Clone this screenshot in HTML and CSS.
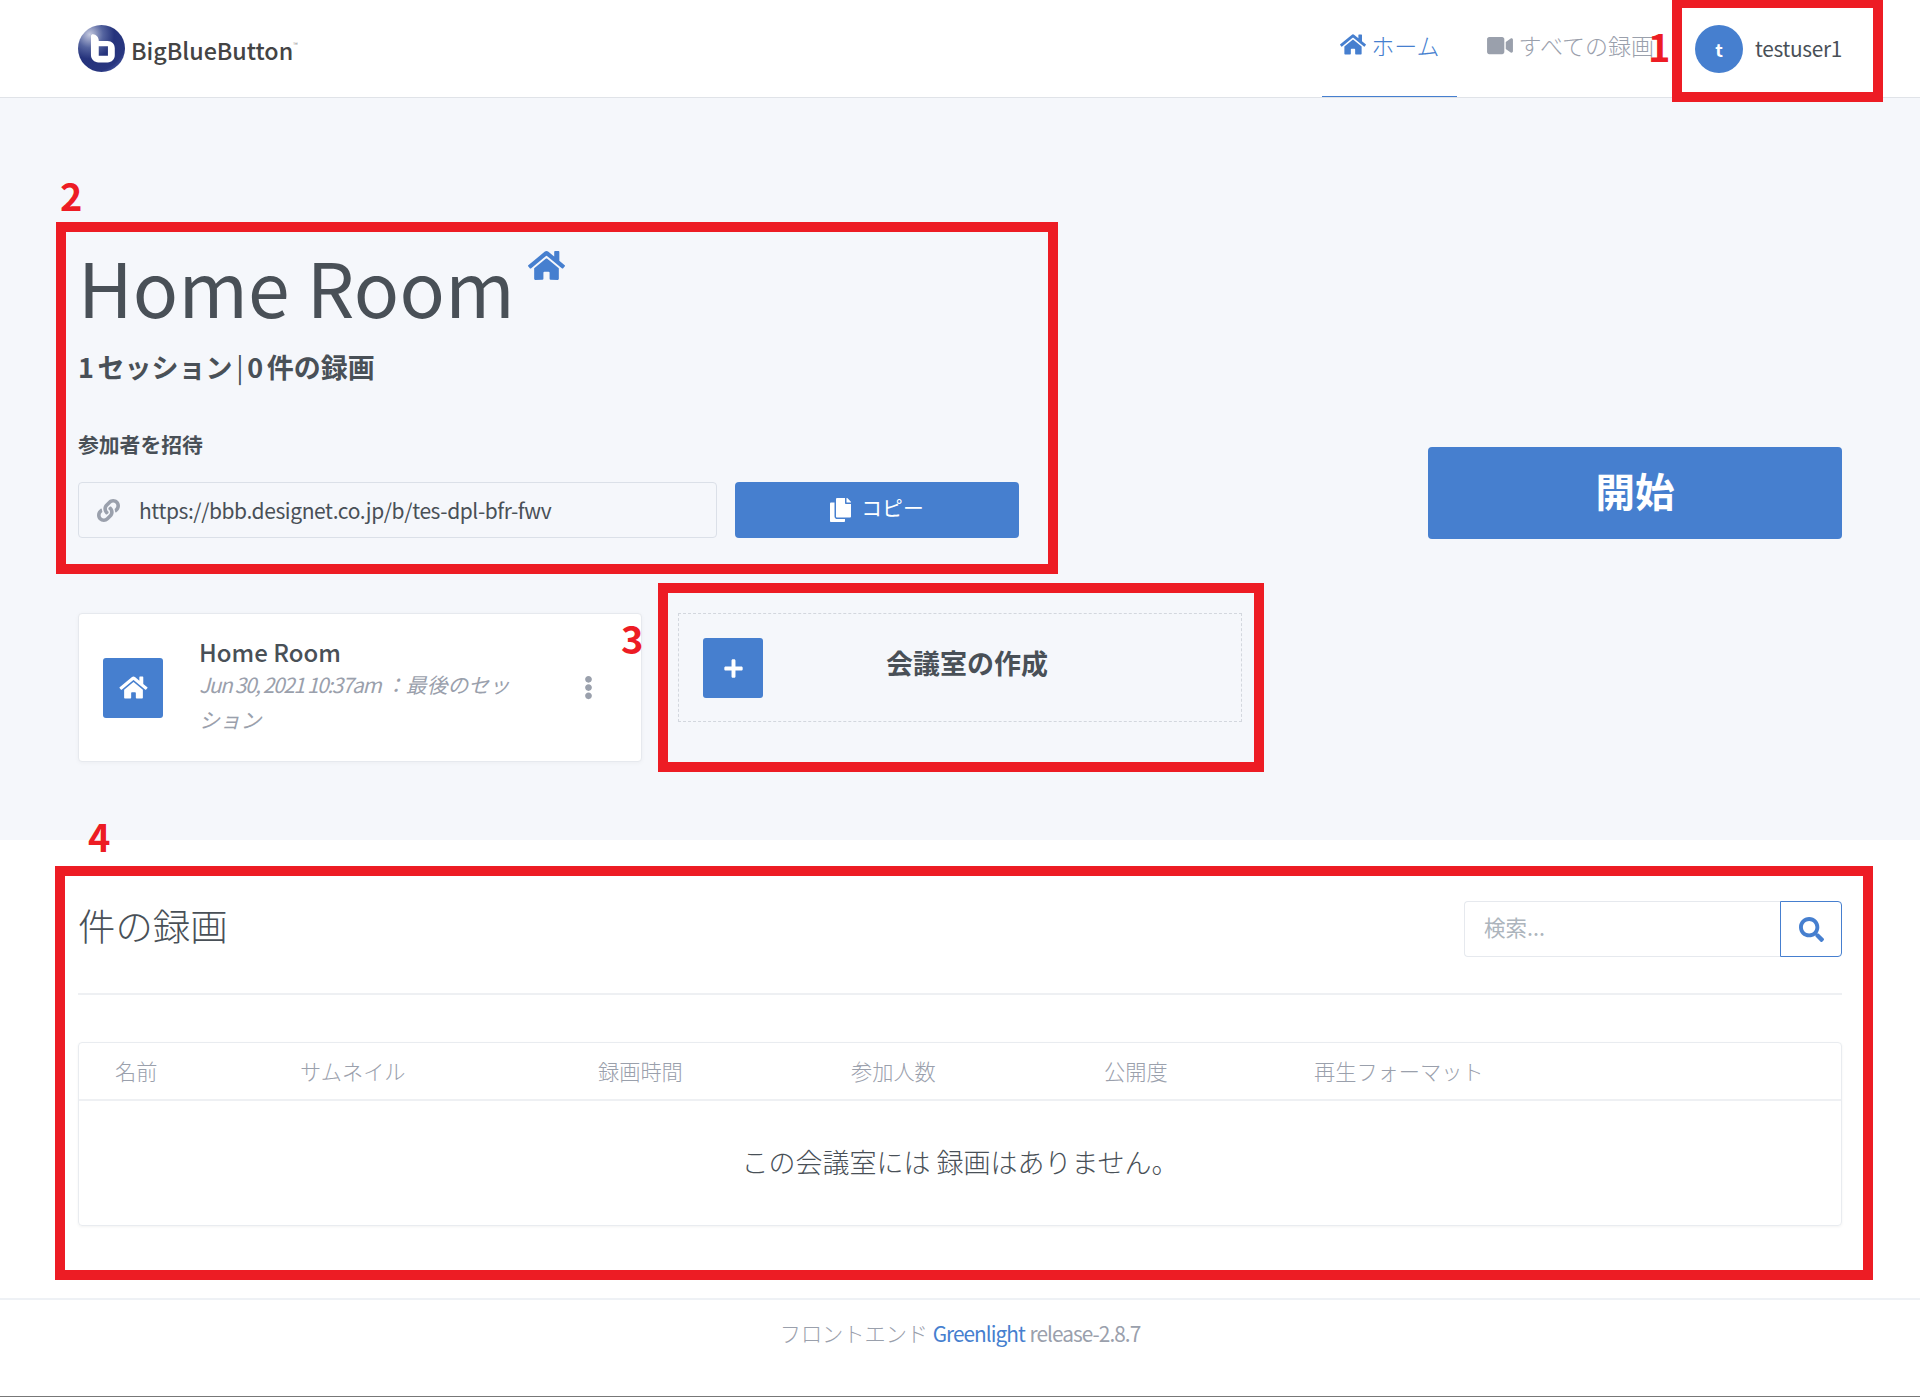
FILE: index.html
```html
<!DOCTYPE html>
<html lang="ja">
<head>
    <meta charset="UTF-8">
    <meta name="viewport" content="width=device-width, initial-scale=1.0">
    <title>BigBlueButton</title>
    <link rel="stylesheet" href="styles.css">
</head>
<body>
    <svg class="icon-defs" aria-hidden="true">
        <symbol id="i-home" viewBox="0 0 576 512"><path d="M280.37 148.26L96 300.11V464a16 16 0 0 0 16 16l112.06-.29a16 16 0 0 0 15.92-16V368a16 16 0 0 1 16-16h64a16 16 0 0 1 16 16v95.64a16 16 0 0 0 16 16.05L464 480a16 16 0 0 0 16-16V300L295.67 148.26a12.19 12.19 0 0 0-15.3 0zM571.6 251.47L488 182.56V44.05a12 12 0 0 0-12-12h-56a12 12 0 0 0-12 12v72.61L318.47 43a48 48 0 0 0-61 0L4.34 251.47a12 12 0 0 0-1.6 16.9l25.5 31A12 12 0 0 0 45.15 301l235.22-193.74a12.19 12.19 0 0 1 15.3 0L530.9 301a12 12 0 0 0 16.9-1.6l25.5-31a12 12 0 0 0-1.7-16.93z"/></symbol>
        <symbol id="i-video" viewBox="0 0 576 512"><path d="M336.2 64H47.8C21.4 64 0 85.4 0 111.8v288.4C0 426.6 21.4 448 47.8 448h288.4c26.4 0 47.8-21.4 47.8-47.8V111.8c0-26.4-21.4-47.8-47.8-47.8zm189.4 37.7L416 177.3v157.4l109.6 75.5c21.2 14.6 50.4-.3 50.4-25.8V127.5c0-25.4-29.1-40.4-50.4-25.8z"/></symbol>
        <symbol id="i-link" viewBox="0 0 512 512"><path d="M326.612 185.391c59.747 59.809 58.927 155.698.36 214.59-.11.12-.24.25-.36.37l-67.2 67.2c-59.27 59.27-155.699 59.262-214.96 0-59.27-59.26-59.27-155.7 0-214.96l37.106-37.106c9.84-9.84 26.786-3.3 27.294 10.606.648 17.722 3.826 35.527 9.69 52.721 1.986 5.822.567 12.262-3.783 16.612l-13.087 13.087c-28.026 28.026-28.905 73.66-1.155 101.96 28.024 28.579 74.086 28.749 102.325.51l67.2-67.19c28.191-28.191 28.073-73.757 0-101.83-3.701-3.694-7.429-6.564-10.341-8.569a16.037 16.037 0 0 1-6.947-12.606c-.396-10.567 3.348-21.456 11.698-29.806l21.054-21.055c5.521-5.521 14.182-6.199 20.584-1.731a152.482 152.482 0 0 1 20.522 17.197zM467.547 44.449c-59.261-59.262-155.69-59.27-214.96 0l-67.2 67.2c-.12.12-.25.25-.36.37-58.566 58.892-59.387 154.781.36 214.59a152.454 152.454 0 0 0 20.521 17.196c6.402 4.468 15.064 3.789 20.584-1.731l21.054-21.055c8.35-8.35 12.094-19.239 11.698-29.806a16.037 16.037 0 0 0-6.947-12.606c-2.912-2.005-6.64-4.875-10.341-8.569-28.073-28.073-28.191-73.639 0-101.83l67.2-67.19c28.239-28.239 74.3-28.069 102.325.51 27.75 28.3 26.872 73.934-1.155 101.96l-13.087 13.087c-4.35 4.35-5.769 10.79-3.783 16.612 5.864 17.194 9.042 34.999 9.69 52.721.509 13.906 17.454 20.446 27.294 10.606l37.106-37.106c59.271-59.259 59.271-155.699.001-214.959z"/></symbol>
        <symbol id="i-copy" viewBox="0 0 448 512"><path d="M320 448v40c0 13.255-10.745 24-24 24H24c-13.255 0-24-10.745-24-24V120c0-13.255 10.745-24 24-24h72v296c0 30.879 25.121 56 56 56h168zm0-344V0H152c-13.255 0-24 10.745-24 24v368c0 13.255 10.745 24 24 24h272c13.255 0 24-10.745 24-24V128H344c-13.2 0-24-10.8-24-24zm120.971-31.029L375.029 7.029A24 24 0 0 0 358.059 0H352v96h96v-6.059a24 24 0 0 0-7.029-16.97z"/></symbol>
        <symbol id="i-search" viewBox="0 0 512 512"><path d="M505 442.7L405.3 343c-4.5-4.5-10.6-7-17-7H372c27.6-35.3 44-79.7 44-128C416 93.1 322.9 0 208 0S0 93.1 0 208s93.1 208 208 208c48.3 0 92.7-16.4 128-44v16.3c0 6.4 2.5 12.5 7 17l99.7 99.7c9.4 9.4 24.6 9.4 33.9 0l28.3-28.3c9.4-9.4 9.4-24.6.1-34zM208 336c-70.7 0-128-57.2-128-128 0-70.7 57.2-128 128-128 70.7 0 128 57.2 128 128 0 70.7-57.2 128-128 128z"/></symbol>
        <symbol id="i-plus" viewBox="0 0 448 512"><path d="M416 208H272V64c0-17.67-14.33-32-32-32h-32c-17.67 0-32 14.33-32 32v144H32c-17.67 0-32 14.33-32 32v32c0 17.67 14.33 32 32 32h144v144c0 17.67 14.33 32 32 32h32c17.67 0 32-14.33 32-32V304h144c17.67 0 32-14.33 32-32v-32c0-17.67-14.33-32-32-32z"/></symbol>
        <symbol id="i-dots" viewBox="0 0 192 512"><path d="M96 184c39.8 0 72 32.2 72 72s-32.2 72-72 72-72-32.2-72-72 32.2-72 72-72zM24 80c0 39.8 32.2 72 72 72s72-32.2 72-72S135.8 8 96 8 24 40.2 24 80zm0 352c0 39.8 32.2 72 72 72s72-32.2 72-72-32.2-72-72-72-72 32.2-72 72z"/></symbol>
    </svg>

    <div class="page">
        <header class="navbar">
            <a class="brand" href="#">
                <svg class="brand-mark" viewBox="0 0 46 46" aria-hidden="true">
                    <defs>
                        <radialGradient id="brand-glow" cx="0.25" cy="0.2" r="0.95">
                            <stop offset="0" stop-color="#c4c9df"/>
                            <stop offset="0.3" stop-color="#55649f"/>
                            <stop offset="0.55" stop-color="#25337c"/>
                            <stop offset="0.85" stop-color="#28367f"/>
                            <stop offset="1" stop-color="#4a5aa6"/>
                        </radialGradient>
                    </defs>
                    <circle cx="23" cy="23" r="23" fill="url(#brand-glow)"/>
                    <path fill="#fff" fill-rule="evenodd" d="M12.700 11c0-1.500 1-2 2-2 3 0 5.600 3 5.600 6v.7H29c4 0 7 3 7 7v7c0 4-3 7-7 7h-9c-4 0-7.300-3-7.300-7zM20.300 20.700V30h9v-9.300z"/>
                </svg>
                <span class="brand-name">BigBlueButton</span><span class="brand-tm">™</span>
            </a>
            <nav class="nav-tabs">
                <a class="nav-tab active" href="#"><svg class="nav-icon"><use href="#i-home"/></svg>ホーム</a>
                <a class="nav-tab" href="#"><svg class="nav-icon"><use href="#i-video"/></svg>すべての録画</a>
            </nav>
            <div class="user">
                <span class="avatar">t</span>
                <span class="user-name">testuser1</span>
            </div>
        </header>

        <main class="hero">
            <div class="hero-top">
                <div class="room-info">
                    <h1 class="room-title">Home Room<svg class="room-title-icon"><use href="#i-home"/></svg></h1>
                    <h5 class="room-stats">1 セッション <span class="stats-sep">|</span> 0 件の録画</h5>
                    <div class="invite-label">参加者を招待</div>
                    <div class="invite-row">
                        <div class="invite-url">
                            <svg class="link-icon"><use href="#i-link"/></svg>
                            <span>https://bbb.designet.co.jp/b/tes-dpl-bfr-fwv</span>
                        </div>
                        <button class="btn btn-copy"><svg class="copy-icon"><use href="#i-copy"/></svg><span class="btn-label">コピー</span></button>
                    </div>
                </div>
                <button class="btn btn-start">開始</button>
            </div>

            <div class="room-row">
                <div class="room-card">
                    <span class="square-icon"><svg class="square-home"><use href="#i-home"/></svg></span>
                    <div class="room-card-body">
                        <div class="room-card-title">Home Room</div>
                        <div class="room-card-date"><span class="date-value">Jun 30, 2021 10:37am</span> ：最後のセッション</div>
                    </div>
                    <svg class="dots"><use href="#i-dots"/></svg>
                </div>
                <div class="room-create">
                    <span class="square-icon"><svg class="square-plus"><use href="#i-plus"/></svg></span>
                    <div class="room-create-text">会議室の作成</div>
                </div>
            </div>
        </main>

        <section class="recordings">
            <div class="recordings-head">
                <h2 class="recordings-title">件の録画</h2>
                <div class="search">
                    <span class="search-input">検索...</span>
                    <span class="search-btn"><svg class="search-icon"><use href="#i-search"/></svg></span>
                </div>
            </div>
            <div class="table-card">
                <div class="table-head">
                    <span>名前</span>
                    <span>サムネイル</span>
                    <span>録画時間</span>
                    <span>参加人数</span>
                    <span>公開度</span>
                    <span>再生フォーマット</span>
                </div>
                <div class="table-empty">この会議室には 録画はありません。</div>
            </div>
        </section>

        <footer class="footer">フロントエンド <a class="footer-latin" href="#">Greenlight</a> <span class="footer-latin">release-2.8.7</span></footer>

        <!-- red call-outs drawn over the screenshot -->
        <div class="callout callout-1"></div>
        <div class="callout callout-2"></div>
        <div class="callout callout-3"></div>
        <div class="callout callout-4"></div>
        <span class="callout-num num-1">1</span>
        <span class="callout-num num-2">2</span>
        <span class="callout-num num-3">3</span>
        <span class="callout-num num-4">4</span>
    </div>
</body>
</html>
```

FILE: styles.css
```css
* {
    margin: 0;
    padding: 0;
    box-sizing: border-box;
}

body {
    font-family: "Noto Sans CJK JP", "Noto Sans", sans-serif;
    font-size: 20.8px;
    color: #495057;
    background: white;
}

a {
    text-decoration: none;
}

.icon-defs {
    display: none;
}

svg {
    fill: currentColor;
    flex-shrink: 0;
}

.page {
    position: relative;
    height: 1397px;
    overflow: hidden;
    border-bottom: 1px solid #777;
}

/* navbar */
.navbar {
    display: flex;
    align-items: center;
    height: 98px;
    padding-left: 78px;
    border-bottom: 1px solid #e0e3e8;
    background: white;
}

.brand {
    display: flex;
    align-items: center;
    color: #444;
}

.brand-mark {
    width: 47px;
    height: 47px;
}

.brand-name {
    margin-left: 6px;
    margin-top: 2px;
    font-size: 23.3px;
    font-weight: 500;
}

.brand-tm {
    font-size: 6px;
    color: #888;
    margin-bottom: 8px;
}

.nav-tabs {
    display: flex;
    gap: 12px;
    margin-left: auto;
    height: 97px;
}

.nav-tab {
    display: flex;
    align-items: center;
    gap: 6px;
    height: 97px;
    padding: 0 18px 7px;
    color: #9aa0ac;
    font-size: 23px;
    font-weight: 300;
}

.nav-tab.active {
    gap: 5px;
    padding-right: 17px;
    color: #467fcf;
    border-bottom: 1px solid #467fcf;
}

.nav-icon {
    width: 26px;
    height: 23px;
}

.user {
    display: flex;
    align-items: center;
    gap: 12px;
    margin-left: 23px;
    padding-right: 78px;
}

.user-name {
    margin-top: -2px;
    letter-spacing: -0.3px;
}

.avatar {
    display: flex;
    align-items: center;
    justify-content: center;
    width: 48px;
    height: 48px;
    border-radius: 50%;
    background: #467fcf;
    color: white;
    font-size: 18px;
    font-weight: 700;
}

/* hero */
.hero {
    height: 742px;
    padding: 0 78px;
    background: #f5f7fb;
}

.hero-top {
    display: flex;
    justify-content: space-between;
    align-items: flex-end;
    height: 441px;
}

.room-info {
    width: 941px;
    margin-bottom: 1px;
}

.room-title {
    display: flex;
    align-items: flex-start;
    font-size: 75px;
    font-weight: 400;
    line-height: 90px;
    letter-spacing: 0.2px;
    color: #495057;
}

.room-title-icon {
    width: 37px;
    height: 33px;
    margin: 8px 0 0 13px;
    color: #467fcf;
}

.room-stats {
    margin-top: 17.5px;
    font-size: 27px;
    line-height: 36px;
    font-weight: 700;
    word-spacing: -2.5px;
}

.stats-sep {
    font-weight: 400;
}

.invite-label {
    margin-top: 44.5px;
    font-size: 20.8px;
    line-height: 30px;
    font-weight: 700;
}

.invite-row {
    display: flex;
    gap: 18px;
    margin-top: 23px;
}

.invite-url {
    display: flex;
    align-items: center;
    gap: 19px;
    width: 639px;
    height: 56px;
    padding-left: 18px;
    border: 1px solid #dbe0e8;
    border-radius: 4px;
    font-size: 21px;
    letter-spacing: -0.41px;
}

.link-icon {
    width: 23px;
    height: 23px;
    color: #9aa0ac;
}

.btn {
    display: flex;
    align-items: center;
    justify-content: center;
    border: none;
    border-radius: 4px;
    background: #467fcf;
    color: white;
    font-family: inherit;
}

.btn-copy {
    gap: 10px;
    width: 284px;
    height: 56px;
    font-size: 20.8px;
}

.btn-label {
    margin-top: -6px;
}

.copy-icon {
    width: 21px;
    height: 24px;
}

.btn-start {
    width: 414px;
    height: 92px;
    padding-bottom: 7px;
    font-size: 39.5px;
    font-weight: 700;
}

.room-row {
    display: flex;
    gap: 37px;
    margin-top: 74px;
}

.square-icon {
    display: flex;
    align-items: center;
    justify-content: center;
    width: 60px;
    height: 60px;
    flex-shrink: 0;
    border-radius: 3px;
    background: #467fcf;
    color: white;
}

.square-home {
    width: 29px;
    height: 25px;
}

.square-plus {
    width: 19px;
    height: 21px;
}

.room-card {
    display: flex;
    align-items: center;
    width: 564px;
    height: 149px;
    padding-left: 24px;
    margin-right: -1px;
    border: 1px solid #e6e9ee;
    border-radius: 4px;
    background: white;
    box-shadow: 0 1px 4px rgba(0, 0, 0, 0.04);
}

.room-card-body {
    width: 325px;
    margin-left: 36px;
    padding-bottom: 1px;
}

.room-card-title {
    font-size: 24px;
    line-height: 30px;
    font-weight: 500;
}

.room-card-date {
    color: #9aa0ac;
    font-size: 20.8px;
    line-height: 35px;
    font-style: italic;
}

.date-value {
    letter-spacing: -1.35px;
}

.dots {
    width: 9px;
    height: 25px;
    margin-left: 60px;
    color: #9aa0ac;
}

.room-create {
    position: relative;
    display: flex;
    width: 564px;
    height: 109px;
    padding: 24px;
    border: 1px dashed #d3d7de;
}

.room-create-text {
    flex: 1;
    padding-right: 46px;
    margin-top: 10px;
    text-align: center;
    font-size: 27px;
    line-height: 30px;
    font-weight: 700;
}

/* recordings */
.recordings {
    height: 458px;
    padding: 0 78px;
}

.recordings-head {
    display: flex;
    justify-content: space-between;
    height: 155px;
    padding-top: 61px;
    border-bottom: 2px solid #eef0f3;
}

.recordings-title {
    font-size: 37.4px;
    line-height: 54px;
    font-weight: 300;
    margin-top: -3px;
}

.search {
    display: flex;
    width: 378px;
    height: 56px;
}

.search-input {
    flex: 1;
    display: flex;
    align-items: center;
    padding: 0 0 5px 19px;
    border: 1px solid #e6e9ee;
    border-right: none;
    border-radius: 4px 0 0 4px;
    color: #adb5bd;
    font-size: 21.5px;
}

.search-btn {
    display: flex;
    align-items: center;
    justify-content: center;
    width: 62px;
    border: 1px solid #467fcf;
    border-radius: 0 4px 4px 0;
    color: #467fcf;
}

.search-icon {
    width: 25px;
    height: 25px;
}

.table-card {
    height: 184px;
    margin-top: 47px;
    border: 1px solid #e9ecf0;
    border-radius: 4px;
    box-shadow: 0 1px 3px rgba(0, 0, 0, 0.05);
}

.table-head {
    display: grid;
    grid-template-columns: 185px 298px 253px 253px 210px 1fr;
    align-items: center;
    height: 58px;
    padding: 0 0 1px 36px;
    border-bottom: 2px solid #eef0f3;
    color: #9aa0ac;
    font-size: 21.2px;
    font-weight: 300;
}

.table-empty {
    padding-top: 43px;
    text-align: center;
    font-size: 27px;
    line-height: 36px;
    font-weight: 300;
}

/* footer */
.footer {
    height: 97px;
    padding-top: 18px;
    border-top: 2px solid #eef1f5;
    text-align: center;
    color: #9aa0ac;
    font-size: 21.2px;
    font-weight: 300;
    line-height: 30px;
}

.footer-latin {
    font-size: 20.8px;
    font-weight: 400;
    letter-spacing: -0.95px;
}

.footer a {
    color: #467fcf;
}

/* call-outs */
.callout {
    position: absolute;
    border: 10px solid #ed1c24;
}

.callout-1 { left: 1672px; top: -2px; width: 211px; height: 104px; }
.callout-2 { left: 56px; top: 222px; width: 1002px; height: 352px; }
.callout-3 { left: 658px; top: 583px; width: 606px; height: 189px; }
.callout-4 { left: 55px; top: 866px; width: 1818px; height: 414px; }

.callout-num {
    position: absolute;
    color: #ed1c24;
    font-size: 38px;
    line-height: 40px;
    font-weight: 700;
}

.num-1 { left: 1648px; top: 26px; }
.num-2 { left: 60px; top: 175px; }
.num-3 { left: 621px; top: 618px; }
.num-4 { left: 88px; top: 816px; }
```
